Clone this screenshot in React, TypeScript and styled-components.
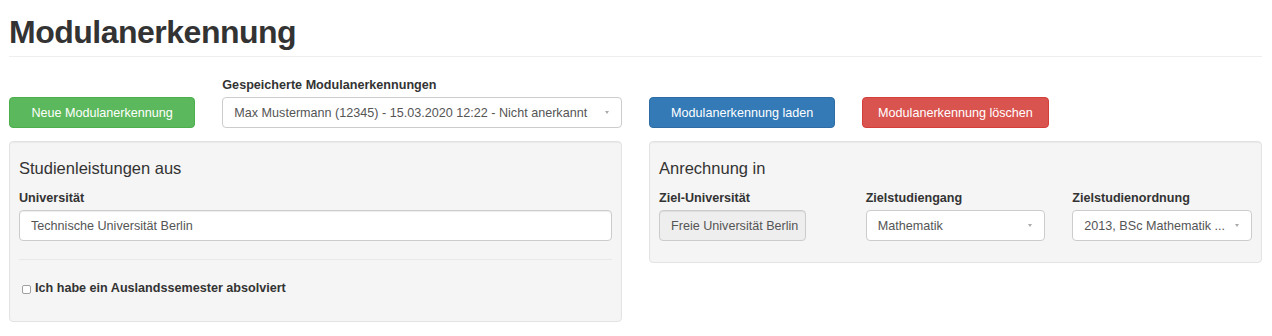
import React from "react";
import styled, { createGlobalStyle } from "styled-components";

const GlobalStyle = createGlobalStyle`
  html, body { margin: 0; padding: 0; background: #fff; }
  body {
    font-family: "Liberation Sans", Arial, Helvetica, sans-serif;
    font-size: 12.6px;
    line-height: 18px;
    color: #333;
  }
  * { box-sizing: border-box; }
`;

const Page = styled.div`
  padding: 0 10px 0 9px;
`;

const Header = styled.div`
  padding-top: 14px;
  padding-bottom: 6px;
  border-bottom: 1px solid #eee;
`;

const Title = styled.h1`
  margin: 0;
  font-size: 32px;
  line-height: 36px;
  font-weight: 700;
  letter-spacing: -0.5px;
  color: #333;
`;

const Grid = styled.div<{ $cols: number; $mt?: number; $align?: string }>`
  display: grid;
  grid-template-columns: repeat(${(p) => p.$cols}, minmax(0, 1fr));
  column-gap: 27px;
  align-items: ${(p) => p.$align ?? "end"};
  margin-top: ${(p) => p.$mt ?? 0}px;
`;

const Col = styled.div<{ $span: number }>`
  grid-column: span ${(p) => p.$span};
  min-width: 0;
`;

const Label = styled.label`
  display: block;
  font-weight: 700;
  font-size: 12.6px;
  line-height: 18px;
  margin-bottom: 3px;
  color: #333;
`;

const Button = styled.button<{ $variant: "success" | "primary" | "danger" }>`
  display: block;
  width: 100%;
  height: 31px;
  border-radius: 4px;
  font-family: inherit;
  font-size: 12.6px;
  color: #fff;
  text-align: center;
  padding: 0;
  cursor: pointer;
  background: ${(p) =>
    p.$variant === "success" ? "#5cb85c" : p.$variant === "primary" ? "#337ab7" : "#d9534f"};
  border: 1px solid
    ${(p) =>
      p.$variant === "success" ? "#4cae4c" : p.$variant === "primary" ? "#2e6da4" : "#d43f3a"};
`;

const Field = styled.div<{ $disabled?: boolean; $width?: number }>`
  display: flex;
  align-items: center;
  height: 31px;
  width: ${(p) => (p.$width ? `${p.$width}px` : "100%")};
  padding: 0 ${(p) => (p.$disabled ? 0 : 11)}px 0 11px;
  border: 1px solid #ccc;
  border-radius: 4px;
  background: ${(p) => (p.$disabled ? "#eee" : "#fff")};
  box-shadow: inset 0 1px 1px rgba(0, 0, 0, 0.075);
  color: #555;
  font-size: 12.6px;
  white-space: nowrap;
`;

const SelectBox = styled(Field)`
  padding-right: 12px;
  box-shadow: none;
`;

const SelectText = styled.span`
  flex: 1;
  min-width: 0;
`;

const Caret = styled.span`
  flex: none;
  width: 0;
  height: 0;
  margin-left: 8px;
  border-style: solid;
  border-width: 3px 2.5px 0 2.5px;
  border-color: #aaa transparent transparent transparent;
`;

const Well = styled.div<{ $pb: number }>`
  background: #f5f5f5;
  border: 1px solid #e3e3e3;
  border-radius: 4px;
  box-shadow: inset 0 1px 1px rgba(0, 0, 0, 0.05);
  padding: 9px 9px ${(p) => p.$pb}px;
`;

const WellTitle = styled.h4`
  margin: 8px 0 12px;
  font-size: 16.5px;
  line-height: 18px;
  font-weight: 400;
  color: #333;
`;

const Separator = styled.hr`
  margin: 18px 0 0;
  border: 0;
  border-top: 1px solid #e8e8e8;
`;

const CheckRow = styled.label`
  display: flex;
  align-items: center;
  gap: 4px;
  margin-top: 19px;
  font-weight: 700;
  font-size: 12.6px;
  line-height: 18px;
  color: #333;
`;

const CheckBox = styled.span`
  display: inline-block;
  width: 9px;
  height: 9px;
  margin-left: 3px;
  margin-top: 2px;
  border: 1px solid #a0a0a0;
  border-radius: 2px;
  background: #fff;
`;

const Select = ({ children }: { children: React.ReactNode }) => (
  <SelectBox>
    <SelectText>{children}</SelectText>
    <Caret />
  </SelectBox>
);

export default function App() {
  return (
    <Page>
      <GlobalStyle />
      <Header>
        <Title>Modulanerkennung</Title>
      </Header>

      <Grid $cols={12} $mt={19}>
        <Col $span={2}>
          <Button $variant="success">Neue Modulanerkennung</Button>
        </Col>
        <Col $span={4}>
          <Label>Gespeicherte Modulanerkennungen</Label>
          <Select>Max Mustermann (12345) - 15.03.2020 12:22 - Nicht anerkannt</Select>
        </Col>
        <Col $span={2}>
          <Button $variant="primary">Modulanerkennung laden</Button>
        </Col>
        <Col $span={2}>
          <Button $variant="danger">Modulanerkennung löschen</Button>
        </Col>
      </Grid>

      <Grid $cols={2} $mt={13} $align="start">
        <Well $pb={24}>
          <WellTitle>Studienleistungen aus</WellTitle>
          <Label>Universität</Label>
          <Field>Technische Universität Berlin</Field>
          <Separator />
          <CheckRow>
            <CheckBox />
            Ich habe ein Auslandssemester absolviert
          </CheckRow>
        </Well>
        <Well $pb={21}>
          <WellTitle>Anrechnung in</WellTitle>
          <Grid $cols={3}>
            <div>
              <Label>Ziel-Universität</Label>
              <Field $disabled $width={147}>Freie Universität Berlin</Field>
            </div>
            <div>
              <Label>Zielstudiengang</Label>
              <Select>Mathematik</Select>
            </div>
            <div>
              <Label>Zielstudienordnung</Label>
              <Select>2013, BSc Mathematik ...</Select>
            </div>
          </Grid>
        </Well>
      </Grid>
    </Page>
  );
}
